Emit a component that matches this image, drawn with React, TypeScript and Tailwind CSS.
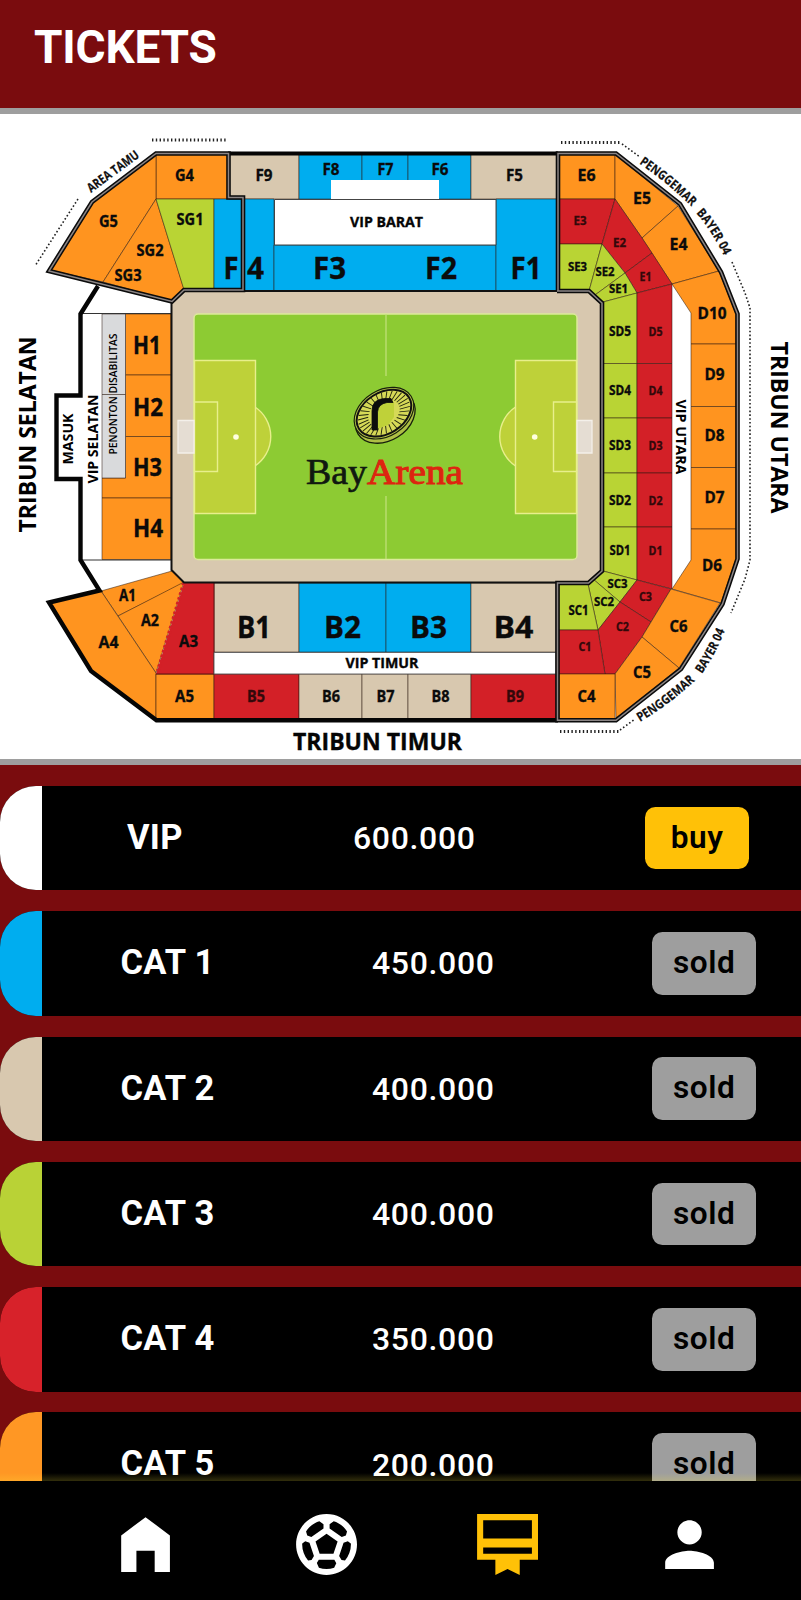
import React from "react";

const ORANGE = "#ff941f";
const LIME = "#b9d434";
const BLUE = "#00adef";
const BEIGE = "#d8c8af";
const RED = "#d32027";

type Zone = [string, string];

const zones: Zone[] = [
  [ORANGE, "156,154 228,154 228,199 156,199"],
  [ORANGE, "156,154 156,199 103,282 49,270 92,202"],
  [ORANGE, "156,199 184,289 171,301 103,282"],
  [LIME, "156,199 214,199 214,290 184,290"],
  [BLUE, "214,199 243,199 243,290 214,290"],
  [BEIGE, "229,154 299,154 299,199 229,199"],
  [BLUE, "243,199 274,199 274,291 243,291"],
  [BLUE, "299,154 362,154 362,199 299,199"],
  [BLUE, "362,154 408,154 408,199 362,199"],
  [BLUE, "408,154 471,154 471,199 408,199"],
  [BEIGE, "471,154 557,154 557,199 471,199"],
  [BLUE, "274,245 496,245 496,291 274,291"],
  [BLUE, "496,199 557,199 557,291 496,291"],
  [ORANGE, "559,154 615,154 615,199 559,199"],
  [ORANGE, "615,154 678,206 642,238 615,199"],
  [ORANGE, "678,206 719,271 672,284 642,238"],
  [ORANGE, "672,284 719,271 736,314 736,344 691,344 691,313"],
  [ORANGE, "691,344 736,344 736,406.5 691,406.5"],
  [ORANGE, "691,406.5 736,406.5 736,467.5 691,467.5"],
  [ORANGE, "691,467.5 736,467.5 736,529 691,529"],
  [ORANGE, "691,529 736,529 736,559 721,603 672,589 691,560"],
  [RED, "559,199 615,199 602,244 559,244"],
  [RED, "615,199 642,238 652,253 625,273 602,244"],
  [RED, "652,253 672,284 637,293 625,273"],
  [LIME, "559,244 602,244 589,291 559,291"],
  [LIME, "602,244 625,273 595,295 589,291"],
  [LIME, "625,273 637,293 603,302 595,295"],
  [LIME, "603,302 637,293 637,363.5 603,363.5"],
  [LIME, "603,363.5 637,363.5 637,418 603,418"],
  [LIME, "603,418 637,418 637,473 603,473"],
  [LIME, "603,473 637,473 637,527 603,527"],
  [LIME, "603,527 637,527 637,580 603,571"],
  [RED, "637,293 672,284 672,363.5 637,363.5"],
  [RED, "637,363.5 672,363.5 672,418 637,418"],
  [RED, "637,418 672,418 672,473 637,473"],
  [RED, "637,473 672,473 672,527 637,527"],
  [RED, "637,527 672,527 672,589 637,580"],
  [LIME, "603,571 637,580 620,602 593,579"],
  [LIME, "593,579 620,602 598,630 588,584"],
  [LIME, "588,584 598,630 559,630 559,584"],
  [RED, "637,580 671,589 651,622 620,602"],
  [RED, "598,630 620,602 651,622 642,637 615,674 605,674"],
  [RED, "559,630 598,630 605,674 559,674"],
  [ORANGE, "671,589 720,603 679,668 642,637"],
  [ORANGE, "642,637 679,668 616,719 615,674"],
  [ORANGE, "559,674 615,674 615,719 559,719"],
  [ORANGE, "101,591 172,571 184,583 118,616"],
  [ORANGE, "118,616 184,582 156,673"],
  [ORANGE, "50,603 101,591 156,673 156,719 91,670"],
  [ORANGE, "156,674 214,674 214,719 156,719"],
  [BEIGE, "214,583 299,583 299,652 214,652"],
  [BLUE, "299,583 386,583 386,652 299,652"],
  [BLUE, "386,583 471,583 471,652 386,652"],
  [BEIGE, "471,583 556,583 556,652 471,652"],
  [RED, "214,674 299,674 299,719 214,719"],
  [BEIGE, "299,674 362,674 362,719 299,719"],
  [BEIGE, "362,674 408,674 408,719 362,719"],
  [BEIGE, "408,674 471,674 471,719 408,719"],
  [RED, "471,674 556,674 556,719 471,719"],
  [ORANGE, "125.5,314 171,314 171,375 125.5,375"],
  [ORANGE, "125.5,375 171,375 171,436.5 125.5,436.5"],
  [ORANGE, "125.5,436.5 171,436.5 171,498 102,498 102,478 125.5,478"],
  [ORANGE, "102,498 171,498 171,559.5 102,559.5"],
  ["#d9dadc", "102,314 125.5,314 125.5,394.5 102,394.5"],
  ["#d9dadc", "102,394.5 125.5,394.5 125.5,478 102,478"],
];

type Label = [string, number, number, number, number];

// text, centre x, baseline y, font size, drawn width
const labels: Label[] = [
  ["G4", 184.5, 180.5, 16.5, 19], ["G5", 108.5, 227, 16.5, 19], ["SG1", 190, 225, 16.5, 27],
  ["SG2", 150, 255.5, 15.5, 27], ["SG3", 128, 281, 15.5, 27],
  ["F9", 264, 180.5, 16, 17], ["F8", 331, 174.5, 16, 17], ["F7", 385.5, 174.5, 16, 16], ["F6", 440, 174.5, 16, 17], ["F5", 514.5, 180.5, 16, 17],
  ["F", 231, 279, 30, 15], ["4", 255.5, 279, 30, 17], ["F3", 329.5, 279, 30, 33], ["F2", 441, 279, 30, 32], ["F1", 526, 279, 30, 31],
  ["E6", 586.5, 180.5, 16.5, 18], ["E5", 642, 203.5, 16.5, 18], ["E4", 678.5, 249.5, 16.5, 18],
  ["D10", 712, 318.5, 16.5, 29], ["D9", 714.5, 379.5, 16.5, 20], ["D8", 714.5, 441, 16.5, 20], ["D7", 714.5, 502.5, 16.5, 20], ["D6", 712, 570.5, 16.5, 20],
  ["SE3", 577.5, 270.5, 13, 19], ["SE2", 605, 275.5, 13, 19], ["SE1", 618.5, 292.5, 13, 19],
  ["SD5", 620, 336, 13.5, 22], ["SD4", 620, 395, 13.5, 22], ["SD3", 620, 449.5, 13.5, 22], ["SD2", 620, 504.5, 13.5, 22], ["SD1", 620, 554.5, 13.5, 21],
  ["SC3", 617.5, 587.5, 13, 20], ["SC2", 604, 606, 13, 20], ["SC1", 578.5, 615, 13.5, 20],
  ["A1", 127.5, 601, 16, 17], ["A2", 150, 625.5, 16, 18], ["A4", 108.5, 647.5, 16.5, 20], ["A3", 188.5, 646.5, 16, 19], ["A5", 184.5, 701.5, 16.5, 19],
  ["B1", 254, 638, 31, 34], ["B2", 342.5, 638, 31, 37], ["B3", 428.5, 638, 31, 37], ["B4", 513.5, 638, 31, 40],
  ["B6", 331, 701.5, 16, 18], ["B7", 385.5, 701.5, 16, 18], ["B8", 440.5, 701.5, 16, 18],
  ["C4", 586.5, 701.5, 16.5, 18], ["C5", 642, 677.5, 16.5, 18], ["C6", 678.5, 631.5, 16.5, 18],
  ["H1", 147, 353.5, 25, 28], ["H2", 148, 415.5, 25, 30], ["H3", 147.5, 475.5, 25, 29], ["H4", 148, 536.5, 25, 30],
];

const redLabels: Label[] = [
  ["E3", 580, 224.5, 13, 13], ["E2", 619.5, 247, 13, 13], ["E1", 645.5, 280.5, 13, 12],
  ["D5", 655.5, 336, 13, 14], ["D4", 655.5, 395, 13, 14], ["D3", 655.5, 449.5, 13, 14], ["D2", 655.5, 504.5, 13, 14], ["D1", 655.5, 554.5, 13, 14],
  ["C3", 645.5, 601, 13, 13], ["C2", 622.5, 631, 13, 13], ["C1", 585, 650.5, 13, 13],
  ["B5", 256, 701.5, 15.5, 18], ["B9", 515, 701.5, 15.5, 18],
];

const titles: Label[] = [
  ["VIP BARAT", 386.5, 227, 14, 73],
  ["VIP TIMUR", 382, 667.5, 14, 73],
  ["TRIBUN TIMUR", 377.5, 749.5, 23.5, 169],
];

// text, x, y, rotation, font size, drawn width
const turned: [string, number, number, number, number, number][] = [
  ["TRIBUN SELATAN", 35.5, 434.5, -90, 23.5, 196],
  ["MASUK", 73, 439, -90, 13.5, 51],
  ["VIP SELATAN", 98, 439, -90, 14, 89],
  ["PENONTON DISABILITAS", 117, 394, -90, 11, 121],
  ["VIP UTARA", 675.5, 437, 90, 14, 75],
  ["TRIBUN UTARA", 771, 427.5, 90, 23.5, 172],
];

const rays = Array.from({ length: 30 }, (_, i) => (i * Math.PI) / 15);

function Text({ item, fill }: { item: Label; fill: string }) {
  const [text, x, y, size, width] = item;
  return (
    <text x={x} y={y} fontSize={size} fill={fill} stroke={fill} strokeWidth="0.35" textAnchor="middle" textLength={width} lengthAdjust="spacingAndGlyphs">
      {text}
    </text>
  );
}

function DoubleLine({ d }: { d: string }) {
  return (
    <g fill="none" strokeLinejoin="miter">
      <path d={d} stroke="#0b0b0b" strokeWidth="4.6" />
      <path d={d} stroke="#8b8585" strokeWidth="1.5" />
    </g>
  );
}

function StadiumMap() {
  return (
    <svg viewBox="0 114 801 645" className="block h-[645px] w-full font-['Open_Sans','Noto_Sans',sans-serif] font-bold" role="img">
      {zones.map(([fill, points]) => (
        <polygon key={points} points={points} fill={fill} stroke="#2a1a10" strokeOpacity="0.65" strokeWidth="0.8" />
      ))}
      <path d="M184 583H214V674H156L158 668L184 583Z" fill={RED} />
      <path d="M184 583L158 671" stroke={RED} strokeWidth="4" strokeDasharray="2.5 2.5" />
      <path d="M214 583V674M156 674H214" stroke="#5b1212" strokeWidth="1" />
      <path d="M331 180H439V199H331Z" fill="#fff" />
      <path d="M274.5 199.5H496V245H274.5Z" fill="#fff" stroke="#444" strokeWidth="1" />
      <path d="M214 652.5H556V674H214Z" fill="#fff" stroke="#555" strokeWidth="0.9" />
      <path d="M82 313.5H171M82 560H171" stroke="#333" strokeWidth="1" />

      <path d="M184 291H589L602 303V571L589 582.5H184L171.5 570V302Z" fill={BEIGE} stroke="#111" strokeWidth="2" />
      <rect x="194" y="314" width="383" height="245.5" rx="4" fill="#8dcb33" stroke="#dcea9a" strokeWidth="1.5" />
      <path d="M386 314V376M386 496V559" stroke="#c4e27c" strokeWidth="1.2" />
      <g fill="#bed139" stroke="#e8ef8c" strokeWidth="1.4">
        <path d="M255 407A35.5 35.5 0 0 1 255 466M515.5 407A35.5 35.5 0 0 0 515.5 466" />
        <path d="M194.5 360.5H255.5V513.5H194.5ZM515.5 360.5H576.5V513.5H515.5Z" />
        <path d="M194.5 402H217.5V471.5H194.5ZM553.5 402H576.5V471.5H553.5Z" />
      </g>
      <path d="M178 420.5H194V453H178ZM577 420.5H592V453H577Z" fill="#e5ddd3" stroke="#f4f0ea" strokeWidth="1.3" />
      <circle cx="236" cy="437" r="2.8" fill="#ffffdf" />
      <circle cx="534.7" cy="437" r="2.8" fill="#ffffdf" />

      <g transform="translate(384.5 414) rotate(-32)">
        <ellipse cx="-1" cy="3" rx="32" ry="23.5" fill="#aebf45" stroke="#17200c" strokeWidth="1.3" />
        <ellipse cx="0" cy="-1" rx="32" ry="23" fill="#b8c64a" stroke="#17200c" strokeWidth="1.2" />
        <ellipse cx="0" cy="-1" rx="29.5" ry="20.5" fill="#d6d957" stroke="#111" strokeWidth="2" />
        {rays.map((a) => (
          <line key={a} x1={Math.cos(a) * 17} y1={Math.sin(a) * 12 - 1} x2={Math.cos(a) * 28} y2={Math.sin(a) * 19.5 - 1} stroke="#1c210d" strokeWidth="0.9" />
        ))}
      </g>
      <path d="M377 429V410Q378 403 388 402H394V417L388 425L380 428Z" fill="#bfd139" />
      <path d="M372 430V411Q372 399 385 398.5H391L393 402.5H387Q378 404 377.5 412V430Z" fill="#0c0c0c" stroke="#0c0c0c" strokeWidth="0.8" />
      <g className="font-['Liberation_Serif',serif]" fontSize="35.5" fontWeight="400">
        <text x="306" y="483.5" fill="#101810" stroke="#101810" strokeWidth="0.7" textLength="61" lengthAdjust="spacingAndGlyphs">Bay</text>
        <text x="367" y="483.5" fill="#dd2510" stroke="#dd2510" strokeWidth="1" textLength="96" lengthAdjust="spacingAndGlyphs">Arena</text>
      </g>

      <path d="M98 286L80.5 314V395.5H56.5V479H80.5V560L99.5 590.5L49 602.5L91 671L156.5 720.3H558" fill="none" stroke="#050505" strokeWidth="4.4" />
      <path d="M228 153.5H558" stroke="#050505" strokeWidth="4.2" />
      <DoubleLine d="M156 153.5H228.5V197.5H243V290H184L172 301.5L49 271L92 202Z" />
      <DoubleLine d="M558 291V153.5H616L680 204L721 272L737.5 314V559L722.5 604L681 669L616 720.3H557.5V583H588.5L602 571V303L589 291H557" />

      <g fill="none" stroke="#222">
        <path d="M152 140H228M561 142.5H621M560 731.5H619" strokeWidth="3" strokeDasharray="1.4 2.4" />
        <path d="M78 199L35 266M622 144L640 157M620 730L635 719M732 262L745 293L750 308V560L745 579L731 613" strokeWidth="1.6" strokeDasharray="1.6 2.2" />
      </g>

      {labels.map((l) => <Text key={l[0]} item={l} fill="#0b0b0b" />)}
      {redLabels.map((l) => <Text key={l[0]} item={l} fill="#33080a" />)}
      {titles.map((l) => <Text key={l[0]} item={l} fill="#050505" />)}
      {turned.map(([text, x, y, angle, size, width]) => (
        <text key={text} transform={`translate(${x} ${y}) rotate(${angle})`} fontSize={size} fontWeight={size === 11 ? 600 : 700} textAnchor="middle" textLength={width} lengthAdjust="spacingAndGlyphs">
          {text}
        </text>
      ))}
      <defs>
        <path id="fans-top-a" d="M639 163.5Q668 183 693 208" />
        <path id="fans-top-b" d="M694 211Q712 230 727 262" />
        <path id="fans-low-a" d="M640 722Q669 705 697 679" />
        <path id="fans-low-b" d="M702 674Q717 651 727 626" />
      </defs>
      <g fontSize="12.8" fill="#111" stroke="#111" strokeWidth="0.2">
        <text transform="translate(91 193) rotate(-36.5)" textLength="61" lengthAdjust="spacingAndGlyphs">AREA TAMU</text>
        <text><textPath href="#fans-top-a" textLength="68" lengthAdjust="spacingAndGlyphs">PENGGEMAR</textPath></text>
        <text><textPath href="#fans-top-b" startOffset="3" textLength="51" lengthAdjust="spacingAndGlyphs">BAYER 04</textPath></text>
        <text><textPath href="#fans-low-a" textLength="69" lengthAdjust="spacingAndGlyphs">PENGGEMAR</textPath></text>
        <text><textPath href="#fans-low-b" textLength="49" lengthAdjust="spacingAndGlyphs">BAYER 04</textPath></text>
      </g>
    </svg>
  );
}

const tickets = [
  { name: "VIP", price: "600.000", swatch: "bg-white", open: true },
  { name: "CAT 1", price: "450.000", swatch: "bg-[#00adef]", open: false },
  { name: "CAT 2", price: "400.000", swatch: "bg-[#d8c8af]", open: false },
  { name: "CAT 3", price: "400.000", swatch: "bg-[#b9d236]", open: false },
  { name: "CAT 4", price: "350.000", swatch: "bg-[#d7222a]", open: false },
  { name: "CAT 5", price: "200.000", swatch: "bg-[#ff9724]", open: false },
];

function TicketRow({ name, price, swatch, open }: (typeof tickets)[number]) {
  return (
    <li className="flex h-[104.4px] shrink-0 items-center overflow-hidden rounded-l-[36px] bg-black">
      <div className={`h-full w-[41.5px] shrink-0 ${swatch}`} />
      <span className={`shrink-0 pb-[2px] text-[34.5px] leading-none font-bold tracking-[0.3px] ${open ? "w-[311.5px] pl-[85.5px]" : "w-[330.5px] pl-[79px]"}`}>{name}</span>
      <span className={`shrink-0 text-[32px] leading-none font-medium tracking-[0.65px] ${open ? "w-[292px]" : "w-[280px]"}`}>{price}</span>
      <button className={`h-[62.6px] w-[104.4px] shrink-0 rounded-[10.4px] pb-px text-[31.6px] leading-none font-semibold tracking-[0.6px] text-black ${open ? "bg-[#ffc107]" : "bg-[#9e9e9e]"}`}>
        {open ? "buy" : "sold"}
      </button>
    </li>
  );
}

const tabs = [
  { name: "Home", color: "fill-white", path: "M12 3L4 9v12h5v-7h6v7h5V9z" },
  {
    name: "Matches",
    color: "fill-white",
    path: "M12 2C6.480 2 2 6.480 2 12s4.480 10 10 10 10-4.480 10-10S17.520 2 12 2zm1 3.300l1.350-.95c1.820.56 3.370 1.760 4.380 3.340l-.39 1.340-1.350.46L13 6.700V5.300zM9.650 4.350L11 5.300v1.400L7.010 9.490l-1.350-.46-.39-1.340c1.010-1.570 2.560-2.770 4.380-3.340zM7.080 17.110l-1.140.1C4.730 15.810 4 13.990 4 12c0-.12.01-.23.02-.35l1-.73 1.380.48 1.460 4.340-.78 1.370zm7.420 2.480c-.79.26-1.630.41-2.500.41s-1.710-.15-2.500-.41l-.69-1.490.64-1.100h5.110l.64 1.110-.7 1.480zM14.270 15H9.730l-1.350-4.020L12 8.440l3.630 2.540L14.270 15zm3.790 2.210l-1.140-.1-.79-1.370 1.460-4.340 1.390-.47 1 .73c.01.11.02.22.02.34 0 1.990-.73 3.810-1.940 5.210z",
  },
  { name: "Tickets", color: "fill-[#ffc107]", path: "M22 2H2v15h6v5l4-2 4 2v-5h6V2zm-2 13H4v-2h16v2zm0-5H4V4h16v6z" },
  { name: "Profile", color: "fill-white", path: "M12 12c2.210 0 4-1.790 4-4s-1.790-4-4-4-4 1.790-4 4 1.790 4 4 4zm0 2c-2.670 0-8 1.340-8 4v2h16v-2c0-2.660-5.330-4-8-4z" },
];

export default function App() {
  return (
    <div className="flex h-[1600px] w-full flex-col overflow-hidden bg-[#7a0c0e] font-[Roboto,sans-serif] text-white">
      <header className="h-[108px] shrink-0 pt-[20px] pl-[34px]">
        <h1 className="text-[46px] leading-[54px] font-bold tracking-[-0.2px]">TICKETS</h1>
      </header>
      <section className="shrink-0 border-y-[6px] border-[#9e9e9e] bg-white text-black">
        <StadiumMap />
      </section>
      <main className="relative min-h-0 flex-1 overflow-hidden pt-[21px]">
        <ul className="flex flex-col gap-[20.9px]">
          {tickets.map((t) => <TicketRow key={t.name} {...t} />)}
        </ul>
        <div className="absolute inset-x-0 bottom-0 h-[8px] bg-linear-to-b from-transparent to-[#ffeb3b]/20" />
      </main>
      <nav className="flex h-[119px] shrink-0 items-start gap-[108.4px] bg-black pt-[27px] pl-[108.5px]">
        {tabs.map((tab) => (
          <svg key={tab.name} viewBox="0 0 24 24" className={`size-[73.1px] shrink-0 ${tab.color}`}>
            <path d={tab.path} />
          </svg>
        ))}
      </nav>
    </div>
  );
}
